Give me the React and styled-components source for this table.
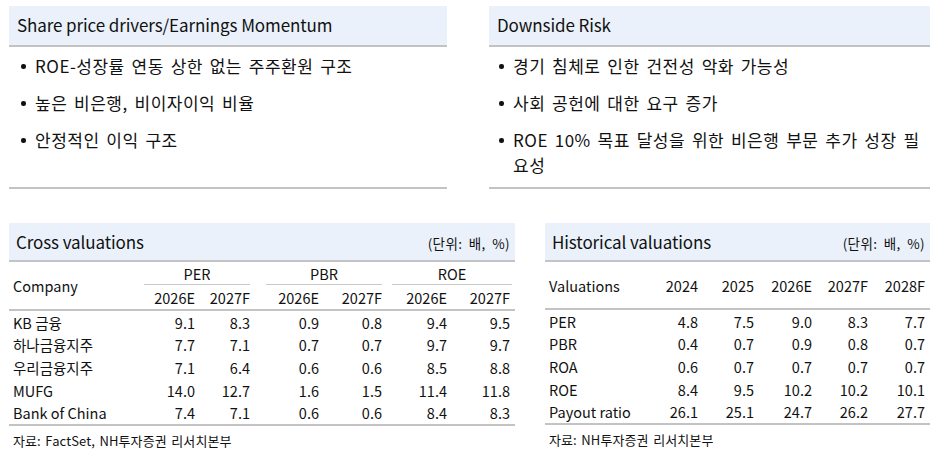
import React from 'react';
import styled, { createGlobalStyle } from 'styled-components';

const GlobalStyle = createGlobalStyle`
  body {
    margin: 0;
    background: #ffffff;
    font-family: "Noto Sans CJK KR", "Noto Sans", sans-serif;
    color: #111111;
  }
`;

const Page = styled.div`
  width: 936px;
  height: 461px;
  padding: 6px 6px 0 9px;
  box-sizing: border-box;
`;

const TopRow = styled.div`
  display: grid;
  grid-template-columns: 438px 441px;
  column-gap: 42px;
`;

const Panel = styled.section`
  display: flex;
  flex-direction: column;
`;

const PanelHeader = styled.div`
  height: 41px;
  display: flex;
  align-items: center;
  padding: 0 0 3px 8px;
  box-sizing: border-box;
  background: #eaf1fa;
  border-bottom: 2px solid #c3c3c3;
  font-size: 17px;
  letter-spacing: -0.1px;
`;

const BulletList = styled.ul`
  list-style: none;
  margin: 0;
  padding: 6px 4px 0 0;
  height: 142px;
  box-sizing: border-box;
  border-bottom: 2px solid #c3c3c3;
  display: flex;
  flex-direction: column;
  gap: 12px;
`;

const Bullet = styled.li`
  position: relative;
  padding-left: ${(p) => p.$indent}px;
  font-size: 17px;
  line-height: 25px;
  letter-spacing: 0.5px;
  word-spacing: 2.5px;

  &::before {
    content: '';
    position: absolute;
    left: ${(p) => p.$indent - 14}px;
    top: 11px;
    width: 4.5px;
    height: 4.5px;
    border-radius: 50%;
    background: #111111;
  }
`;

const BottomRow = styled.div`
  display: grid;
  grid-template-columns: 506px 385px;
  column-gap: 30px;
  margin-top: 34px;
`;

const TableBox = styled.section`
  display: flex;
  flex-direction: column;
`;

const TableHeader = styled.div`
  height: 37px;
  display: flex;
  align-items: center;
  justify-content: space-between;
  padding: 0 5px 0 7px;
  background: #eaf1fa;
  border-bottom: 2px solid #c3c3c3;
`;

const TableTitle = styled.span`
  font-size: 17px;
  letter-spacing: -0.1px;
`;

const Unit = styled.span`
  font-size: 13.5px;
  letter-spacing: 0.4px;
  word-spacing: 3px;
  padding-top: 2px;
`;

const Grid = styled.div`
  display: grid;
  grid-template-columns: ${(p) => p.$cols};
  font-size: 14.5px;
  border-bottom: 2px solid #c3c3c3;
`;

const HeadCell = styled.div`
  display: flex;
  align-items: center;
  justify-content: ${(p) => (p.$left ? 'flex-start' : 'flex-end')};
  padding: ${(p) => (p.$left ? '0 0 0 4px' : '0 5px 0 0')};
  grid-row: ${(p) => p.$row || 'auto'};
  height: ${(p) => p.$h || 23}px;
`;

const GroupCell = styled.div`
  grid-column: span 2;
  height: 22px;
  display: flex;
  align-items: center;
  justify-content: center;
  margin: 0 ${(p) => p.$r}px 0 ${(p) => p.$l}px;
  border-bottom: 1px solid #c8c8c8;
`;

const HeadDivider = styled.div`
  grid-column: 1 / -1;
  height: 2px;
  background: #c3c3c3;
`;

const Cell = styled.div`
  height: 22.6px;
  display: flex;
  align-items: center;
  justify-content: ${(p) => (p.$left ? 'flex-start' : 'flex-end')};
  padding: ${(p) => (p.$left ? '0 0 0 4px' : '0 5px 0 0')};
  white-space: nowrap;
`;

const Source = styled.div`
  font-size: 13px;
  padding: 5px 0 0 4px;
  letter-spacing: 0.1px;
  word-spacing: 1.5px;
`;

const drivers = [
  'ROE-성장률 연동 상한 없는 주주환원 구조',
  '높은 비은행, 비이자이익 비율',
  '안정적인 이익 구조',
];

const risks = [
  '경기 침체로 인한 건전성 악화 가능성',
  '사회 공헌에 대한 요구 증가',
  'ROE 10% 목표 달성을 위한 비은행 부문 추가 성장 필요성',
];

const cross = [
  ['KB 금융', '9.1', '8.3', '0.9', '0.8', '9.4', '9.5'],
  ['하나금융지주', '7.7', '7.1', '0.7', '0.7', '9.7', '9.7'],
  ['우리금융지주', '7.1', '6.4', '0.6', '0.6', '8.5', '8.8'],
  ['MUFG', '14.0', '12.7', '1.6', '1.5', '11.4', '11.8'],
  ['Bank of China', '7.4', '7.1', '0.6', '0.6', '8.4', '8.3'],
];

const historical = [
  ['PER', '4.8', '7.5', '9.0', '8.3', '7.7'],
  ['PBR', '0.4', '0.7', '0.9', '0.8', '0.7'],
  ['ROA', '0.6', '0.7', '0.7', '0.7', '0.7'],
  ['ROE', '8.4', '9.5', '10.2', '10.2', '10.1'],
  ['Payout ratio', '26.1', '25.1', '24.7', '26.2', '27.7'],
];

const groups = [
  { name: 'PER', l: 0, r: 5 },
  { name: 'PBR', l: 11, r: 5 },
  { name: 'ROE', l: 5, r: 3 },
];

function DataRows({ rows }) {
  return rows.map((row) =>
    row.map((v, i) => (
      <Cell key={row[0] + i} $left={i === 0}>
        {v}
      </Cell>
    ))
  );
}

export default function App() {
  return (
    <Page>
      <GlobalStyle />
      <TopRow>
        <Panel>
          <PanelHeader>Share price drivers/Earnings Momentum</PanelHeader>
          <BulletList>
            {drivers.map((t) => (
              <Bullet key={t} $indent={26}>{t}</Bullet>
            ))}
          </BulletList>
        </Panel>
        <Panel>
          <PanelHeader>Downside Risk</PanelHeader>
          <BulletList>
            {risks.map((t) => (
              <Bullet key={t} $indent={24}>{t}</Bullet>
            ))}
          </BulletList>
        </Panel>
      </TopRow>

      <BottomRow>
        <TableBox>
          <TableHeader>
            <TableTitle>Cross valuations</TableTitle>
            <Unit>(단위: 배, %)</Unit>
          </TableHeader>
          <Grid $cols="135px 56px 55px 69px 63px 65px 63px">
            <HeadCell $left $row="span 2" $h={46}>Company</HeadCell>
            {groups.map((g) => (
              <GroupCell key={g.name} $l={g.l} $r={g.r}>{g.name}</GroupCell>
            ))}
            {['2026E', '2027F', '2026E', '2027F', '2026E', '2027F'].map((y, i) => (
              <HeadCell key={i} $h={24}>{y}</HeadCell>
            ))}
            <HeadDivider />
            <DataRows rows={cross} />
          </Grid>
          <Source>자료: FactSet, NH투자증권 리서치본부</Source>
        </TableBox>

        <TableBox>
          <TableHeader>
            <TableTitle>Historical valuations</TableTitle>
            <Unit>(단위: 배, %)</Unit>
          </TableHeader>
          <Grid $cols="102px 56px 56px 58px 56px 57px">
            <HeadCell $left $h={46}>Valuations</HeadCell>
            {['2024', '2025', '2026E', '2027F', '2028F'].map((y) => (
              <HeadCell key={y} $h={46}>{y}</HeadCell>
            ))}
            <HeadDivider />
            <DataRows rows={historical} />
          </Grid>
          <Source>자료: NH투자증권 리서치본부</Source>
        </TableBox>
      </BottomRow>
    </Page>
  );
}
